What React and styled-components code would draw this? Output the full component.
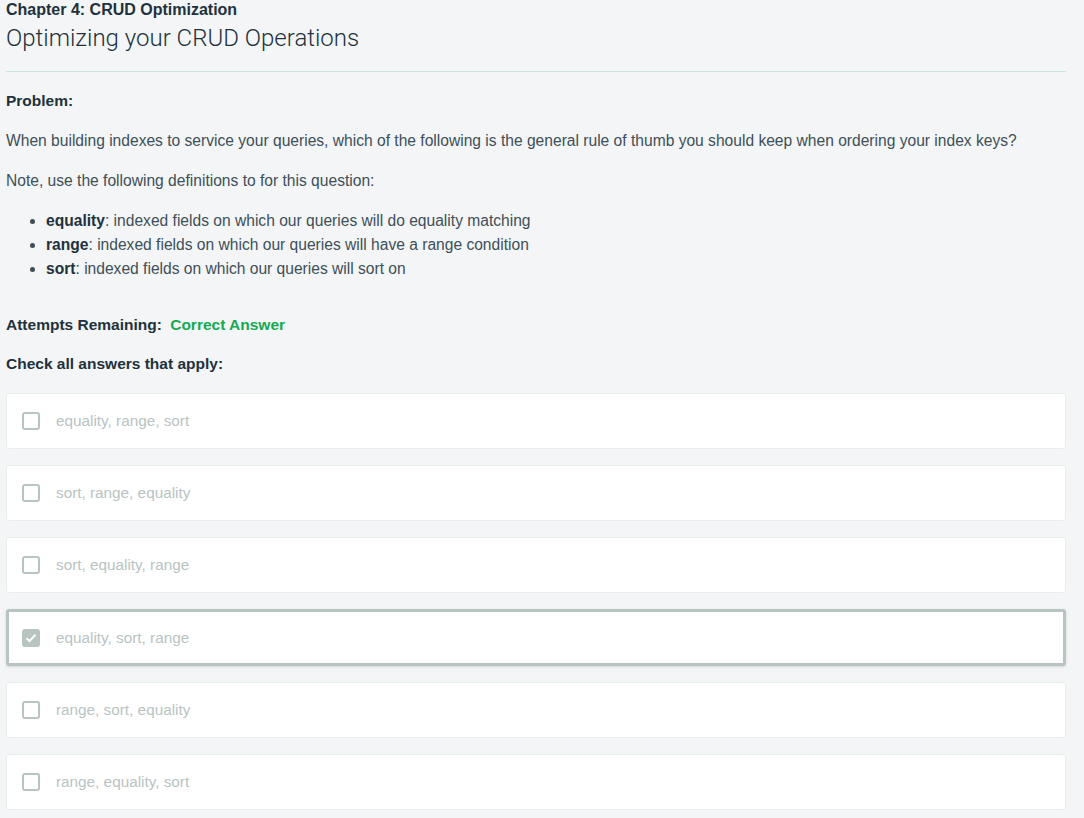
import React from "react";
import styled, { createGlobalStyle } from "styled-components";

const GlobalStyle = createGlobalStyle`
  html, body {
    margin: 0;
    padding: 0;
    background: #f4f5f7;
  }
  body {
    font-family: "Liberation Sans", Arial, sans-serif;
    color: #3d4f58;
  }
`;

const answers = [
  { text: "equality, range, sort" },
  { text: "sort, range, equality" },
  { text: "sort, equality, range" },
  { text: "equality, sort, range", checked: true },
  { text: "range, sort, equality" },
  { text: "range, equality, sort" },
];

function App() {
  return (
    <Page>
      <GlobalStyle />
      <Chapter>Chapter 4: CRUD Optimization</Chapter>
      <Title>Optimizing your CRUD Operations</Title>
      <Divider />
      <Label>Problem:</Label>
      <Para>
        When building indexes to service your queries, which of the following
        is the general rule of thumb you should keep when ordering your index
        keys?
      </Para>
      <Para>Note, use the following definitions to for this question:</Para>
      <Bullets>
        <li>
          <b>equality</b>: indexed fields on which our queries will do equality
          matching
        </li>
        <li>
          <b>range</b>: indexed fields on which our queries will have a range
          condition
        </li>
        <li>
          <b>sort</b>: indexed fields on which our queries will sort on
        </li>
      </Bullets>
      <Attempts>
        Attempts Remaining: <Correct>Correct Answer</Correct>
      </Attempts>
      <Label>Check all answers that apply:</Label>
      <Answers>
        {answers.map((a) => (
          <Card key={a.text} $checked={a.checked}>
            <Box $checked={a.checked}>
              {a.checked && (
                <svg width="12" height="10" viewBox="0 0 12 10">
                  <path
                    d="M1.5 5.2 L4.5 8 L10.5 1.8"
                    fill="none"
                    stroke="#fff"
                    strokeWidth="2"
                  />
                </svg>
              )}
            </Box>
            <AnswerText>{a.text}</AnswerText>
          </Card>
        ))}
      </Answers>
    </Page>
  );
}

export default App;

const Page = styled.div`
  padding: 0 18px 0 6px;
`;
const Chapter = styled.div`
  font-size: 16px;
  font-weight: bold;
  color: #21313c;
  line-height: 20px;
`;
const Title = styled.h1`
  margin: 2px 0 0;
  font-family: Roboto, "Liberation Sans", sans-serif;
  font-size: 24px;
  font-weight: 300;
  color: #21313c;
  line-height: 32px;
`;
const Divider = styled.hr`
  margin: 17px 0 0;
  border: 0;
  border-top: 1px solid #cbe3de;
`;
const Label = styled.div`
  margin-top: 19px;
  font-size: 15.5px;
  font-weight: bold;
  color: #21313c;
  line-height: 20px;
`;
const Para = styled.p`
  margin: 20px 0 0;
  font-size: 15.6px;
  line-height: 20px;
`;
const Bullets = styled.ul`
  margin: 18px 0 0;
  padding-left: 40px;
  font-size: 15.6px;
  line-height: 24px;
  b {
    color: #21313c;
  }
`;
const Attempts = styled(Label)`
  margin-top: 34px;
`;
const Correct = styled.span`
  margin-left: 4px;
  color: #13aa52;
`;
const Answers = styled.div`
  margin-top: 19px;
  display: flex;
  flex-direction: column;
  gap: 16px;
`;
const Card = styled.div`
  display: flex;
  align-items: center;
  height: ${(p) => (p.$checked ? "57px" : "56px")};
  box-sizing: border-box;
  background: #fff;
  border: ${(p) => (p.$checked ? "3px solid #b8c4c2" : "1px solid #e7eeec")};
  border-radius: 3px;
  padding-left: ${(p) => (p.$checked ? "13px" : "15px")};
  box-shadow: ${(p) => (p.$checked ? "0 1px 3px rgba(0,0,0,0.12)" : "none")};
`;
const Box = styled.div`
  width: 18px;
  height: 18px;
  box-sizing: border-box;
  border: 2px solid #b8c4c2;
  border-radius: 3px;
  background: ${(p) => (p.$checked ? "#b8c4c2" : "#fff")};
  display: flex;
  align-items: center;
  justify-content: center;
  flex-shrink: 0;
`;
const AnswerText = styled.span`
  margin-left: 16px;
  font-size: 15.3px;
  color: #b8c4c2;
`;
